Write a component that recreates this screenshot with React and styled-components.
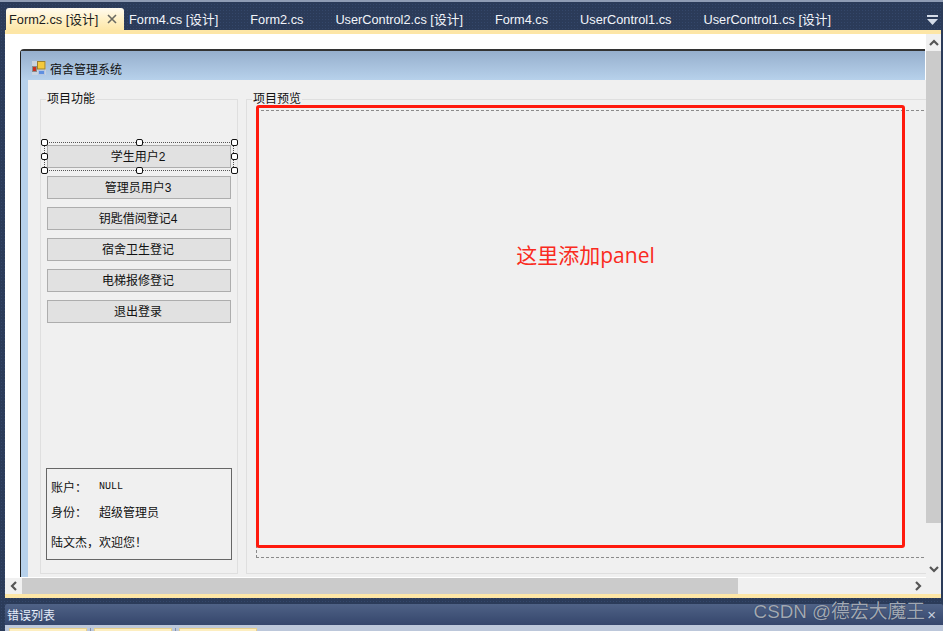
import React from "react";
import styled, { createGlobalStyle } from "styled-components";

const UI_FONT = `"Liberation Sans", "Noto Sans CJK SC", sans-serif`;
const FORM_FONT = `"Noto Sans CJK SC", "Liberation Sans", sans-serif`;

const TABS = [
  { label: "Form2.cs [设计]", active: true },
  { label: "Form4.cs [设计]" },
  { label: "Form2.cs" },
  { label: "UserControl2.cs [设计]" },
  { label: "Form4.cs" },
  { label: "UserControl1.cs" },
  { label: "UserControl1.cs [设计]" },
];

const MENU = ["管理员用户3", "钥匙借阅登记4", "宿舍卫生登记", "电梯报修登记", "退出登录"];

// handle offsets inside the selection frame
const HANDLES = [
  [-4, -4], [91, -4], [186, -4],
  [-4, 10], [186, 10],
  [-4, 24], [91, 24], [186, 24],
];

const Chevron = ({ dir }) => {
  const rot = { up: 0, right: 90, down: 180, left: 270 }[dir];
  return (
    <svg width="10" height="8" viewBox="0 0 10 8" style={{ transform: `rotate(${rot}deg)` }}>
      <path d="M1 6 L5 2 L9 6" fill="none" stroke="#555" strokeWidth="2.2" />
    </svg>
  );
};

const FormIcon = () => (
  <svg width="14" height="14" viewBox="0 0 14 14">
    <rect x="0" y="0" width="14" height="14" fill="#c9d3df" />
    <rect x="0.5" y="5.5" width="4" height="5" fill="#c8301e" stroke="#8a8a8a" />
    <rect x="5.5" y="0.5" width="7.5" height="7.5" fill="#f4c93c" stroke="#9a8030" />
    <rect x="6.5" y="9.5" width="6" height="4" fill="#5f90e0" stroke="#b4c6e2" />
  </svg>
);

const App = () => (
  <Page>
    <GlobalStyle />
    <TabStrip>
      {TABS.map((t) => (
        <Tab key={t.label + (t.active ? "a" : "")} $active={t.active}>
          {t.label}
          {t.active && (
            <TabClose width="10" height="10" viewBox="0 0 10 10">
              <path d="M1 1 L9 9 M9 1 L1 9" stroke="#6a6a62" strokeWidth="1.6" fill="none" />
            </TabClose>
          )}
        </Tab>
      ))}
      <TabMenu>
        <svg width="11" height="10" viewBox="0 0 11 10">
          <rect x="0" y="0" width="11" height="2" fill="#d5dce8" />
          <path d="M0 4 H11 L5.5 10 Z" fill="#d5dce8" />
        </svg>
      </TabMenu>
    </TabStrip>

    <Editor>
      <Canvas>
        <FormWindow>
          <TitleBar>
            <FormIcon />
            宿舍管理系统
          </TitleBar>
          <FormBody>
            <MenuGroup>
              <GroupLegend $shift={-1}>项目功能</GroupLegend>
              <SelectedSlot>
                <MenuButton>学生用户2</MenuButton>
                <SelectionFrame>
                  {HANDLES.map(([x, y]) => (
                    <Handle key={`${x}-${y}`} style={{ left: x, top: y }} />
                  ))}
                </SelectionFrame>
              </SelectedSlot>
              {MENU.map((m) => (
                <MenuButton key={m}>{m}</MenuButton>
              ))}
              <InfoBox>
                <InfoRow>
                  <InfoKey>账户：</InfoKey>
                  <NullValue>NULL</NullValue>
                </InfoRow>
                <InfoRow>
                  <InfoKey>身份：</InfoKey>
                  超级管理员
                </InfoRow>
                <Welcome>陆文杰，欢迎您！</Welcome>
              </InfoBox>
            </MenuGroup>
            <PreviewGroup>
              <GroupLegend $shift={-4}>项目预览</GroupLegend>
              <PreviewPanel />
            </PreviewGroup>
            <Annotation>
              <AnnotationText>这里添加panel</AnnotationText>
            </Annotation>
          </FormBody>
        </FormWindow>
      </Canvas>
      <VScroll>
        <ScrollButton><Chevron dir="up" /></ScrollButton>
        <VThumb />
        <ScrollButton><Chevron dir="down" /></ScrollButton>
      </VScroll>
      <HScroll>
        <ScrollButton $h><Chevron dir="left" /></ScrollButton>
        <HThumb />
        <ScrollButton $h><Chevron dir="right" /></ScrollButton>
      </HScroll>
      <Corner />
    </Editor>

    <ErrorPanel>
      <ErrorHeader>错误列表</ErrorHeader>
      <ErrorTools>
        <ErrorTool />
        <ToolSep />
        <ErrorTool />
        <ToolSep />
        <ErrorTool />
      </ErrorTools>
    </ErrorPanel>
    <Watermark>CSDN @德宏大魔王</Watermark>
    <PanelClose>×</PanelClose>
  </Page>
);

const GlobalStyle = createGlobalStyle`
  html, body {
    margin: 0;
    padding: 0;
    background: #2b3b59;
  }
`;

const Page = styled.div`
  position: relative;
  width: 943px;
  height: 631px;
  overflow: hidden;
  display: flex;
  flex-direction: column;
  font-family: ${UI_FONT};
  background-color: #2b3b59;
  background-image: radial-gradient(#34476a 0.7px, transparent 0.8px);
  background-size: 3px 3px;
`;

const TabStrip = styled.div`
  height: 28px;
  flex: none;
  display: flex;
  align-items: flex-end;
  padding-left: 6px;
  border-top: 2px solid #8f9cb4;
  position: relative;
`;

const Tab = styled.div`
  height: 22px;
  flex: none;
  display: flex;
  align-items: center;
  white-space: nowrap;
  font-size: 12.75px;
  line-height: 15px;
  box-sizing: border-box;
  padding: ${(p) => (p.$active ? "0 7px 0 3px" : "0 16px")};
  width: ${(p) => (p.$active ? "118px" : "auto")};
  margin-right: ${(p) => (p.$active ? "-11px" : "0")};
  border-radius: 3px 3px 0 0;
  color: ${(p) => (p.$active ? "#1c1c1c" : "#f2f5fa")};
  background: ${(p) => (p.$active ? "linear-gradient(#fffbf0, #fff0c4 55%, #fde7a8)" : "transparent")};
`;

const TabClose = styled.svg`
  margin-left: auto;
  flex: none;
`;

const TabMenu = styled.div`
  position: absolute;
  right: 5px;
  top: 13px;
  display: flex;
`;

const Editor = styled.div`
  flex: none;
  height: 560px;
  margin: 0 2px 0 5px;
  border-top: 4px solid #fde6a6;
  border-bottom: 4px solid #fde6a6;
  display: grid;
  grid-template-columns: 921px 15px;
  grid-template-rows: 543px 17px;
  background: #fff;
`;

const Canvas = styled.div`
  overflow: hidden;
  padding: 15px 0 0 15px;
  background: #fff;
`;

const FormWindow = styled.div`
  width: 1100px;
  height: 528px;
  box-sizing: border-box;
  border-top: 2px solid #333;
  border-left: 1px solid #222;
  border-radius: 4px 0 0 0;
  display: flex;
  flex-direction: column;
`;

const TitleBar = styled.div`
  height: 29px;
  flex: none;
  box-sizing: border-box;
  display: flex;
  align-items: center;
  gap: 4px;
  padding: 5px 0 0 11px;
  font: 12px ${FORM_FONT};
  color: #111;
  background: linear-gradient(#96afcd, #b7d1eb);
`;

const FormBody = styled.div`
  position: relative;
  flex: 1;
  min-height: 0;
  display: flex;
  gap: 8px;
  padding: 13px 0 3px 12px;
  background: #f0f0f0;
  border-left: 7px solid #b7d1eb;
  box-sizing: border-box;
`;

const GroupBox = styled.fieldset`
  margin: 0;
  min-width: 0;
  box-sizing: border-box;
  border: 1px solid #dfdfdf;
  font-family: ${FORM_FONT};
`;

const GroupLegend = styled.legend`
  position: relative;
  top: -1px;
  padding: 0 1px;
  margin-left: ${(p) => p.$shift}px;
  font-size: 12px;
  line-height: 12px;
  color: #111;
`;

const MenuGroup = styled(GroupBox)`
  width: 198px;
  flex: none;
  padding: 40px 5px 13px 6px;
  display: flex;
  flex-direction: column;
  gap: 8px;
`;

const PreviewGroup = styled(GroupBox)`
  flex: 1;
  padding: 5px 0 15px 9px;
  display: flex;
  flex-direction: column;
`;

const SelectedSlot = styled.div`
  position: relative;
`;

const MenuButton = styled.div`
  height: 23px;
  box-sizing: border-box;
  width: 184px;
  padding: 0 2px 3px 0;
  display: flex;
  align-items: center;
  justify-content: center;
  background: #e1e1e1;
  border: 1px solid #adadad;
  font: 12px ${UI_FONT};
  color: #111;
`;

const SelectionFrame = styled.div`
  position: absolute;
  left: -3px;
  top: -3px;
  width: 190px;
  height: 29px;
  border: 1px dotted #555;
  box-sizing: border-box;
`;

const Handle = styled.span`
  position: absolute;
  width: 7px;
  height: 7px;
  box-sizing: border-box;
  background: #fff;
  border: 1px solid #111;
  border-radius: 2px;
`;

const InfoBox = styled.div`
  margin-top: auto;
  margin-left: -1px;
  width: 186px;
  height: 92px;
  flex: none;
  box-sizing: border-box;
  border: 1px solid #666;
  padding: 5px 0 0 4px;
  display: flex;
  flex-direction: column;
  font-size: 12px;
  color: #111;
`;

const InfoRow = styled.div`
  height: 25px;
  display: flex;
  align-items: center;
`;

const InfoKey = styled.span`
  width: 48px;
`;

const NullValue = styled.span`
  font: 10px "Liberation Mono", monospace;
`;

const Welcome = styled.div`
  margin-top: 7px;
  height: 20px;
  display: flex;
  align-items: center;
`;

const PreviewPanel = styled.div`
  flex: 1;
  border: 1px dashed #8a8a8a;
  border-right: none;
`;

const Annotation = styled.div`
  position: absolute;
  left: 228px;
  top: 25px;
  width: 649px;
  height: 443px;
  box-sizing: border-box;
  border: 3px solid #ff1a0d;
  border-radius: 3px;
  display: flex;
  justify-content: center;
  padding: 131px 0 0 10px;
`;

const AnnotationText = styled.div`
  height: 32px;
  font: 21px "Open Sans", "Noto Sans CJK SC", sans-serif;
  color: #fa2a20;
`;

const VScroll = styled.div`
  background: #f0f0f0;
  border-left: 1px solid #fff;
  margin-left: -1px;
  display: flex;
  flex-direction: column;
`;

const ScrollButton = styled.div`
  flex: none;
  ${(p) => (p.$h ? "width: 17px;" : "height: 17px;")}
  display: flex;
  align-items: center;
  justify-content: center;
`;

const VThumb = styled.div`
  flex: none;
  height: 472px;
  background: #cbcbcb;
  margin-bottom: auto;
`;

const HScroll = styled.div`
  background: #f0f0f0;
  display: flex;
  border-top: 1px solid #fff;
  box-sizing: border-box;
`;

const HThumb = styled.div`
  flex: none;
  width: 716px;
  background: #cbcbcb;
  margin-right: auto;
`;

const Corner = styled.div`
  background: #f0f0f0;
`;

const ErrorPanel = styled.div`
  flex: none;
  margin: 6px 0 0 5px;
  display: flex;
  flex-direction: column;
`;

const ErrorHeader = styled.div`
  height: 21px;
  display: flex;
  align-items: center;
  padding-left: 2px;
  border-radius: 2px 2px 0 0;
  font: 12px ${FORM_FONT};
  color: #e6eefa;
  background: linear-gradient(#4f6286, #35466c);
`;

const ErrorTools = styled.div`
  height: 6px;
  display: flex;
  padding: 3px 0 0 4px;
  box-sizing: border-box;
  background: #bcc7da;
`;

const ErrorTool = styled.div`
  width: 78px;
  background: #fdeec0;
  border: 1px solid #e8cf8a;
  border-bottom: none;
  box-sizing: border-box;
`;

const ToolSep = styled.div`
  width: 1px;
  margin: 0 3px;
  background: #8492aa;
`;

const Watermark = styled.div`
  position: absolute;
  right: 18px;
  bottom: 8px;
  font: 18.8px ${UI_FONT};
  color: rgba(170, 176, 186, 0.95);
  text-shadow: 0 0 1px #22304c;
  white-space: nowrap;
`;

const PanelClose = styled.div`
  position: absolute;
  right: 7px;
  bottom: 8px;
  font: 15px ${UI_FONT};
  color: #c8d0de;
`;

export default App;
